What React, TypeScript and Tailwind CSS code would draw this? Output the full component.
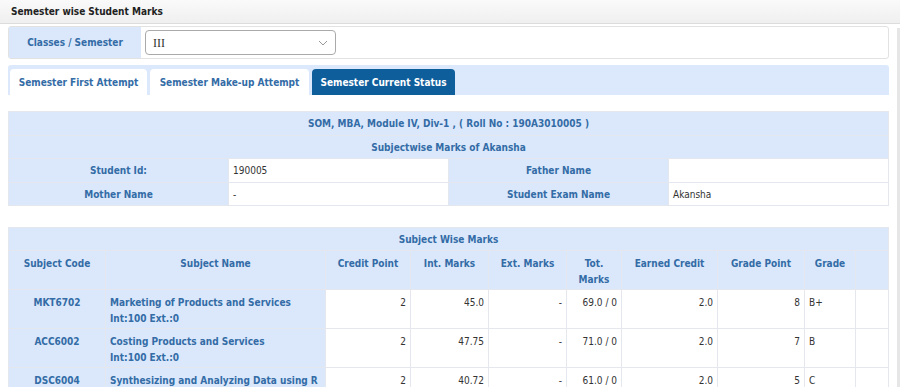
import React from 'react';

const subjects = [
    { code: 'MKT6702', name: 'Marketing of Products and Services', extra: 'Int:100 Ext.:0', credit: '2', int: '45.0', ext: '-', tot: '69.0 / 0', earned: '2.0', gp: '8', grade: 'B+' },
    { code: 'ACC6002', name: 'Costing Products and Services', extra: 'Int:100 Ext.:0', credit: '2', int: '47.75', ext: '-', tot: '71.0 / 0', earned: '2.0', gp: '7', grade: 'B' },
    { code: 'DSC6004', name: 'Synthesizing and Analyzing Data using R', extra: 'Int:100 Ext.:0', credit: '2', int: '40.72', ext: '-', tot: '61.0 / 0', earned: '2.0', gp: '5', grade: 'C' },
];

const label = 'bg-[#dbe8fb] border border-[#e4e8ee] font-bold text-[#336ca6]';
const cell = 'border border-[#e4e8ee] text-[#333] px-[4px] pt-[5px]';

export default function App() {
    return (
        <div className="w-[900px] h-[387px] overflow-hidden bg-white text-[10px] font-['DejaVu_Sans_Condensed','DejaVu_Sans',sans-serif]">

            {/* Page title */}
            <div className="h-[24px] bg-gradient-to-b from-[#fafafa] to-[#efefef] border-b border-[#dcdcdc] px-[11px] flex items-center">
                <span className="font-bold text-[#222]">Semester wise Student Marks</span>
            </div>

            <div className="flex">
                <div className="flex-1 px-[8px]">

                    {/* Class selector */}
                    <div className="mt-[2px] h-[33px] border border-[#e2e2e2] rounded-[3px] flex">
                        <div className="w-[132px] bg-[#dbe8fb] flex items-center justify-center font-bold text-[#336ca6]">
                            Classes / Semester
                        </div>
                        <div className="ml-[4px] mt-[3px] w-[191px] h-[25px] border border-[#aaa] rounded-[4px] flex items-center justify-between px-[7px]">
                            <span className="font-['Liberation_Serif',serif] text-[12px] text-[#333]">III</span>
                            <svg width="10" height="6" viewBox="0 0 10 6" fill="none" stroke="#999" strokeWidth="1">
                                <path d="M1 1l4 4 4-4" />
                            </svg>
                        </div>
                    </div>

                    {/* Tabs */}
                    <div className="mt-[6px] h-[30px] bg-[#dce8fc] rounded-t-[3px] flex items-end gap-[3px] pl-[2px]">
                        <div className="w-[137px] h-[26px] bg-white rounded-t-[4px] flex items-center justify-center font-bold text-[#336ca6]">Semester First Attempt</div>
                        <div className="w-[159px] h-[26px] bg-white rounded-t-[4px] flex items-center justify-center font-bold text-[#336ca6]">Semester Make-up Attempt</div>
                        <div className="w-[143px] h-[26px] bg-[#0e5e9c] rounded-t-[4px] flex items-center justify-center font-bold text-white">Semester Current Status</div>
                    </div>

                    {/* Student info */}
                    <table className="mt-[16px] w-full border-collapse table-fixed">
                        <colgroup>
                            <col className="w-[220px]" />
                            <col className="w-[220px]" />
                            <col className="w-[220px]" />
                            <col />
                        </colgroup>
                        <tbody>
                            <tr className="h-[24px]">
                                <td colSpan={4} className={`${label} text-center`}>SOM, MBA, Module IV, Div-1 , ( Roll No : 190A3010005 )</td>
                            </tr>
                            <tr className="h-[23px]">
                                <td colSpan={4} className={`${label} text-center`}>Subjectwise Marks of Akansha</td>
                            </tr>
                            <tr className="h-[24px]">
                                <td className={`${label} text-center`}>Student Id:</td>
                                <td className="border border-[#e4e8ee] px-[4px] text-[#333]">190005</td>
                                <td className={`${label} text-center`}>Father Name</td>
                                <td className="border border-[#e4e8ee] px-[4px] text-[#333]"></td>
                            </tr>
                            <tr className="h-[23px]">
                                <td className={`${label} text-center`}>Mother Name</td>
                                <td className="border border-[#e4e8ee] px-[4px] text-[#333]">-</td>
                                <td className={`${label} text-center`}>Student Exam Name</td>
                                <td className="border border-[#e4e8ee] px-[4px] text-[#333]">Akansha</td>
                            </tr>
                        </tbody>
                    </table>

                    {/* Subject marks */}
                    <table className="mt-[21px] w-full border-collapse table-fixed">
                        <colgroup>
                            <col className="w-[97px]" />
                            <col className="w-[220px]" />
                            <col className="w-[85px]" />
                            <col className="w-[78px]" />
                            <col className="w-[78px]" />
                            <col className="w-[55px]" />
                            <col className="w-[96px]" />
                            <col className="w-[87px]" />
                            <col className="w-[51px]" />
                            <col />
                        </colgroup>
                        <thead>
                            <tr className="h-[23px]">
                                <th colSpan={10} className={`${label} text-center`}>Subject Wise Marks</th>
                            </tr>
                            <tr className="h-[39px] align-top">
                                <th className={`${label} pt-[5px]`}>Subject Code</th>
                                <th className={`${label} pt-[5px]`}>Subject Name</th>
                                <th className={`${label} pt-[5px]`}>Credit Point</th>
                                <th className={`${label} pt-[5px]`}>Int. Marks</th>
                                <th className={`${label} pt-[5px]`}>Ext. Marks</th>
                                <th className={`${label} pt-[5px] leading-[16px]`}>Tot.<br />Marks</th>
                                <th className={`${label} pt-[5px]`}>Earned Credit</th>
                                <th className={`${label} pt-[5px]`}>Grade Point</th>
                                <th className={`${label} pt-[5px]`}>Grade</th>
                                <th className={label}></th>
                            </tr>
                        </thead>
                        <tbody>
                            {subjects.map((s) => (
                                <tr key={s.code} className="h-[39px] align-top">
                                    <td className={`${label} text-center pt-[5px]`}>{s.code}</td>
                                    <td className={`${label} px-[4px] pt-[5px] leading-[16px] whitespace-nowrap`}>
                                        {s.name}<br />{s.extra}
                                    </td>
                                    <td className={`${cell} text-right`}>{s.credit}</td>
                                    <td className={`${cell} text-right`}>{s.int}</td>
                                    <td className={`${cell} text-right`}>{s.ext}</td>
                                    <td className={`${cell} text-right`}>{s.tot}</td>
                                    <td className={`${cell} text-right`}>{s.earned}</td>
                                    <td className={`${cell} text-right`}>{s.gp}</td>
                                    <td className={`${cell} text-left`}>{s.grade}</td>
                                    <td className="border border-[#e4e8ee]"></td>
                                </tr>
                            ))}
                        </tbody>
                    </table>
                </div>

                {/* Scrollbar track */}
                <div className="w-[3px] mt-[4px] h-[400px] bg-[#e6e6e6]"></div>
            </div>
        </div>
    );
}
